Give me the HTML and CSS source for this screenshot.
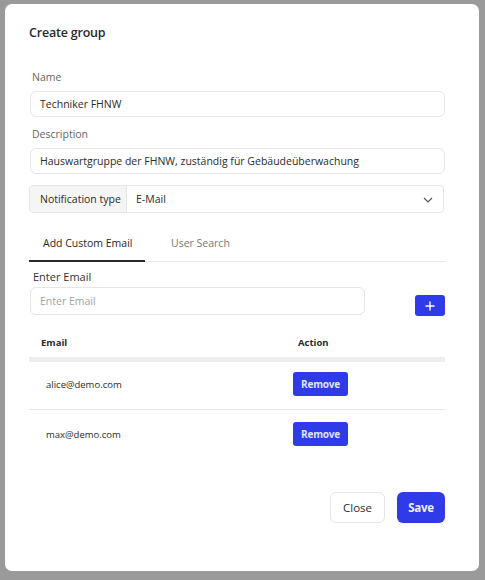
FILE: index.html
```html
<!DOCTYPE html>
<html>
<head>
<meta charset="utf-8">
<link rel="stylesheet" href="styles.css">
</head>
<body>
<div class="modal">
  <h1 class="title">Create group</h1>

  <div class="field field-name">
    <label class="label">Name</label>
    <div class="input">Techniker FHNW</div>
  </div>

  <div class="field field-desc">
    <label class="label">Description</label>
    <div class="input">Hauswartgruppe der FHNW, zuständig für Gebäudeüberwachung</div>
  </div>

  <div class="select-group">
    <div class="addon">Notification type</div>
    <div class="select">
      <span>E-Mail</span>
      <svg class="chev" width="10" height="6" viewBox="0 0 10 6"><path d="M1 1 L5 5 L9 1" fill="none" stroke="#555" stroke-width="1.2"/></svg>
    </div>
  </div>

  <div class="tabs">
    <div class="tab active">Add Custom Email</div>
    <div class="tab">User Search</div>
  </div>

  <div class="email-row">
    <div class="email-field">
      <label class="label dark">Enter Email</label>
      <div class="input tall placeholder">Enter Email</div>
    </div>
    <button class="plus">
      <svg width="10" height="10" viewBox="0 0 10 10"><path d="M5 0.5 V9.5 M0.5 5 H9.5" stroke="#fff" stroke-width="1.4"/></svg>
    </button>
  </div>

  <div class="table">
    <div class="thead">
      <div class="th c1">Email</div>
      <div class="th c2">Action</div>
    </div>
    <div class="tr">
      <div class="td c1">alice@demo.com</div>
      <div class="td c2"><button class="remove">Remove</button></div>
    </div>
    <div class="tr last">
      <div class="td c1">max@demo.com</div>
      <div class="td c2"><button class="remove">Remove</button></div>
    </div>
  </div>

  <div class="footer">
    <button class="btn close">Close</button>
    <button class="btn save">Save</button>
  </div>
</div>
</body>
</html>
```

FILE: styles.css
```css
* { box-sizing: border-box; }
html, body { margin: 0; padding: 0; }
body {
  background: #9a9a9a;
  width: 485px;
  height: 580px;
  font-family: "Open Sans", "Noto Sans", sans-serif;
  color: #333;
  padding: 4px 6px 9px 5px;
}
.modal {
  background: #fff;
  border-radius: 7px;
  height: 567px;
  width: 474px;
  padding: 20px 34px 0 24px;
}
.title {
  margin: 0;
  font-size: 12.5px;
  line-height: 18px;
  font-weight: 600;
  color: #2a2a2a;
  letter-spacing: -0.2px;
}
.field-name { margin-top: 27px; }
.field-desc { margin-top: 9px; }
.label {
  display: block;
  font-size: 10.5px;
  line-height: 16px;
  color: #666;
  padding-left: 3px;
  margin-bottom: 6px;
}
.label.dark { color: #333; font-size: 11px; padding-left: 4px; margin-bottom: 2px; }
.input {
  height: 26px;
  margin-left: 1px;
  border: 1px solid #e6e6e6;
  border-radius: 6px;
  font-size: 10.5px;
  line-height: 24px;
  padding: 0 9px;
  color: #2b2b2b;
  white-space: nowrap;
}
.input.tall { height: 28px; line-height: 26px; }
.placeholder { color: #a3a3a8; }

.select-group {
  margin-top: 11px;
  display: flex;
  height: 28px;
  border: 1px solid #e6e6e6;
  border-radius: 4px;
  width: 415px;
}
.addon {
  width: 97px;
  background: #f5f5f5;
  border-right: 1px solid #e6e6e6;
  font-size: 10.5px;
  line-height: 26px;
  padding-left: 10px;
  color: #2b2b2b;
  border-radius: 4px 0 0 4px;
}
.select {
  flex: 1;
  display: flex;
  align-items: center;
  justify-content: space-between;
  padding: 0 10px 0 9px;
  font-size: 10.5px;
  color: #2b2b2b;
}
.chev { margin-top: 1px; }

.tabs {
  margin-top: 11px;
  display: flex;
  border-bottom: 1px solid #e8e8e8;
  height: 38px;
}
.tab {
  font-size: 10.5px;
  line-height: 16px;
  padding: 11px 0 0;
  color: #777;
  height: 38px;
}
.tab.active {
  color: #1f1f1f;
  width: 116px;
  padding-left: 14px;
  border-bottom: 2px solid #2a2a2e;
  margin-bottom: -1px;
}
.tab + .tab { margin-left: 26px; }

.email-row {
  margin-top: 7px;
  display: flex;
  justify-content: space-between;
  align-items: flex-end;
}
.email-field { width: 336px; }
.plus {
  width: 30px;
  height: 21px;
  margin-bottom: -1px;
  background: #2f3be9;
  border: none;
  border-radius: 3px;
  padding: 0;
  display: flex;
  align-items: center;
  justify-content: center;
}

.table { margin-top: 12px; width: 416px; }
.thead {
  display: grid;
  grid-template-columns: 264px 1fr;
  height: 35px;
  border-bottom: 5px solid #eeeeee;
  align-items: center;
  font-size: 9.5px;
  font-weight: 700;
  color: #2b2b2b;
}
.th.c1 { padding-left: 12px; }
.th.c2 { padding-left: 5px; }
.tr {
  display: grid;
  grid-template-columns: 264px 1fr;
  align-items: center;
  padding: 10px 0 13px;
  border-bottom: 1px solid #e8e8e8;
  font-size: 9.5px;
  color: #2b2b2b;
}
.tr.last { border-bottom: none; padding-top: 12px; }
.td.c1 { padding-left: 17px; }
.remove {
  height: 24px;
  width: 55px;
  background: #2f3be9;
  border: none;
  border-radius: 3px;
  color: #dfe3ff;
  font-family: "Open Sans", "Noto Sans", sans-serif;
  font-size: 10px;
  font-weight: 700;
  padding: 0;
  letter-spacing: -0.2px;
}

.footer {
  margin-top: 33px;
  display: flex;
  justify-content: flex-end;
  gap: 12px;
}
.btn {
  height: 31px;
  border-radius: 6px;
  font-family: "Open Sans", "Noto Sans", sans-serif;
  font-size: 11.5px;
  padding: 0;
}
.close {
  width: 55px;
  background: #fff;
  border: 1px solid #e6e6e6;
  color: #2b2b2b;
}
.save {
  width: 48px;
  background: #2f3be9;
  border: none;
  color: #eef0ff;
  font-weight: 700;
  letter-spacing: -0.3px;
}
```
